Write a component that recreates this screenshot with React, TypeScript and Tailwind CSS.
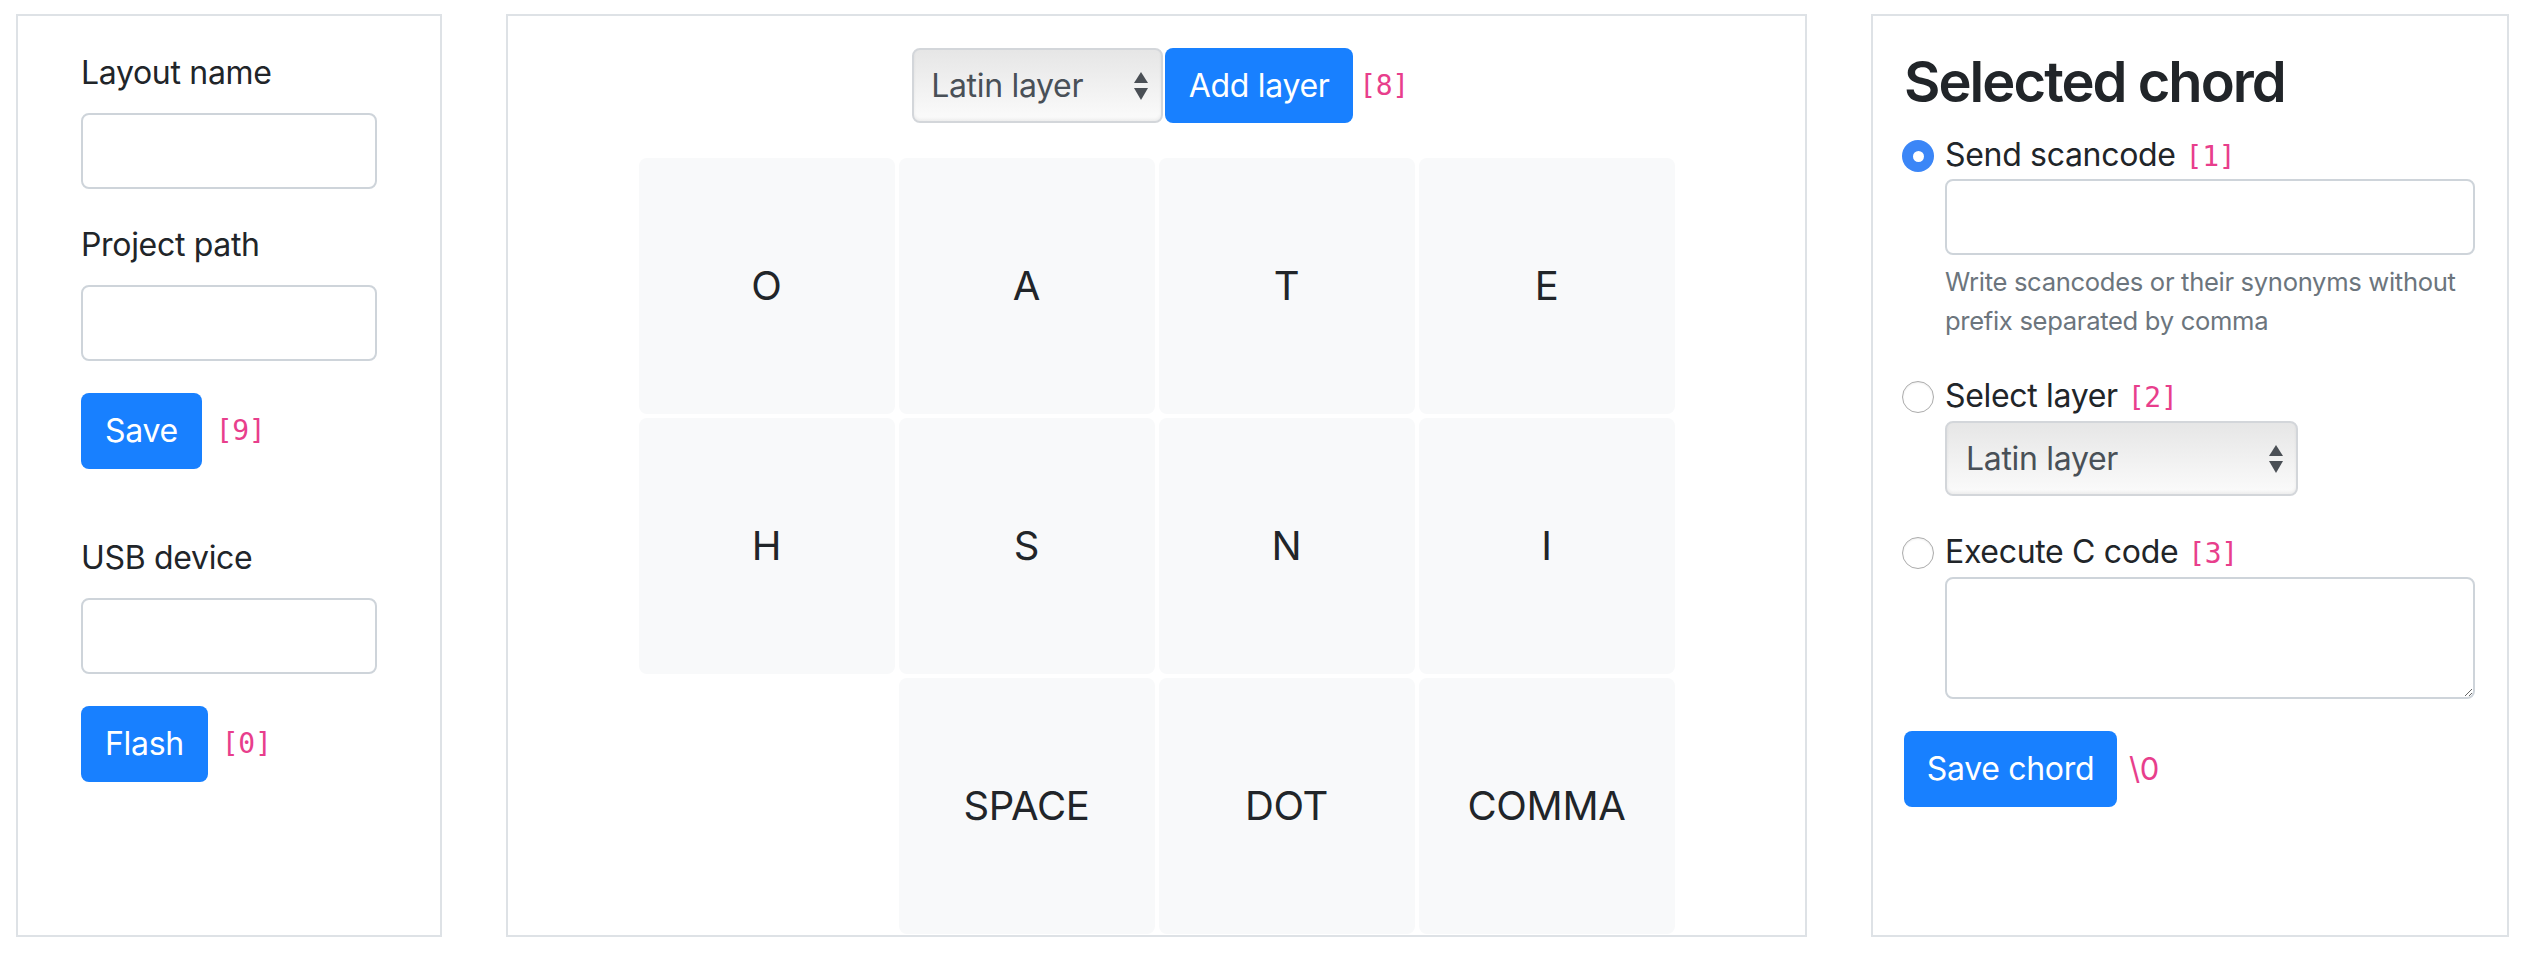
import React from "react";

const code = "font-['DejaVu_Sans_Mono',monospace] text-[28px] text-[#e83e8c]";
const btn =
  "h-[76px] whitespace-nowrap rounded-[8px] bg-[#1880ff] text-[32px] leading-[48px] text-white";
const input =
  "block h-[76px] w-full rounded-[8px] border-2 border-[#ced4da] bg-white";

function Field({ label }: { label: string }) {
  return (
    <div className="mb-8">
      <label className="mb-4 block">{label}</label>
      <input type="text" className={input} />
    </div>
  );
}

function FakeSelect({ width, padLeft }: { width: string; padLeft: string }) {
  // mimics the native macOS select look
  return (
    <div
      className={`flex h-[75px] items-center rounded-[8px] border-2 border-[#d3d6da] bg-gradient-to-b from-[#e6e6e6] to-[#fbfbfb] pr-[12px] text-[#495057] shadow-[inset_0_-2px_3px_rgba(0,0,0,0.06)] ${width} ${padLeft}`}
    >
      <span>Latin layer</span>
      <svg className="ml-auto" width="16" height="30" viewBox="0 0 16 30">
        <path d="M8 1 L15 12 L1 12 Z" fill="#4a4f55" />
        <path d="M1 17 L15 17 L8 29 Z" fill="#4a4f55" />
      </svg>
    </div>
  );
}

function Radio({ checked }: { checked?: boolean }) {
  return checked ? (
    <span className="flex h-[32px] w-[32px] shrink-0 items-center justify-center rounded-full bg-[#3b86f7]">
      <span className="block h-[11px] w-[11px] rounded-full bg-white" />
    </span>
  ) : (
    <span className="block h-[32px] w-[32px] shrink-0 rounded-full border border-[#acacac] bg-white shadow-[inset_0_1px_2px_rgba(0,0,0,0.08)]" />
  );
}

function RadioLabel({
  checked,
  text,
  hint,
  raised,
}: {
  checked?: boolean;
  text: string;
  hint: string;
  raised?: boolean;
}) {
  return (
    <label className="flex h-[52px] items-start">
      <span className={`-ml-[2px] ${raised ? "mt-[9px]" : "mt-[13px]"}`}>
        <Radio checked={checked} />
      </span>
      <span className={`ml-[11px] ${raised ? "pt-0" : "pt-[4px]"}`}>
        {text}
        <code className={`ml-[10px] leading-none ${code}`}>{hint}</code>
      </span>
    </label>
  );
}

function Key({ label }: { label?: string }) {
  if (!label) return <div />;
  return (
    <div className="flex h-[256px] items-center justify-center rounded-[8px] bg-[#f8f9fa] text-[40px]">
      {label}
    </div>
  );
}

const keys = ["O", "A", "T", "E", "H", "S", "N", "I", "", "SPACE", "DOT", "COMMA"];

export default function App() {
  return (
    <div className="flex min-h-[962px] items-start bg-white pl-[16px] pt-[14px] font-['Inter',sans-serif] text-[32px] leading-[48px] tracking-[-0.01em] text-[#212529]">
      {/* settings */}
      <aside className="h-[923px] w-[426px] shrink-0 border-2 border-[#dee2e6] pl-[63px] pr-[63px] pt-[33px]">
        <Field label="Layout name" />
        <Field label="Project path" />
        <div className="flex items-center">
          <button className={`${btn} px-6`}>Save</button>
          <code className={`ml-[14px] ${code}`}>[9]</code>
        </div>

        <div className="mt-[65px]">
          <Field label="USB device" />
        </div>
        <div className="flex items-center">
          <button className={`${btn} px-6`}>Flash</button>
          <code className={`ml-[14px] ${code}`}>[0]</code>
        </div>
      </aside>

      {/* layer keys */}
      <main className="ml-[64px] flex h-[923px] w-[1301px] shrink-0 flex-col items-center border-2 border-[#dee2e6] pt-[32px]">
        <div className="flex items-center pl-[8px]">
          <FakeSelect width="w-[251px]" padLeft="pl-[17px]" />
          <button className="ml-[2px] h-[75px] w-[188px] rounded-[8px] bg-[#1880ff] text-white">
            Add layer
          </button>
          <code className={`ml-[6px] ${code}`}>[8]</code>
        </div>
        <div className="mt-[35px] grid grid-cols-[repeat(4,256px)] gap-[4px]">
          {keys.map((k, i) => (
            <Key key={i} label={k} />
          ))}
        </div>
      </main>

      {/* chord editor */}
      <section className="ml-[64px] h-[923px] w-[638px] shrink-0 border-2 border-[#dee2e6] pl-[31px] pr-[32px] pt-[33px]">
        <h3 className="mb-[11px] text-[56px] font-semibold leading-[1.2] tracking-[-0.035em]">
          Selected chord
        </h3>

        <div className="mb-8">
          <RadioLabel checked text="Send scancode" hint="[1]" />
          <div className="ml-[41px]">
            <input type="text" className={`${input} h-[74px]`} />
            <p className="mt-2 text-[25.6px] leading-[38.4px] text-[#6c757d]">
              Write scancodes or their synonyms without prefix separated by comma
            </p>
          </div>
        </div>

        <div className="mb-8">
          <RadioLabel raised text="Select layer" hint="[2]" />
          <div className="-mt-[3px] ml-[41px]">
            <FakeSelect width="w-[353px]" padLeft="pl-[19px]" />
          </div>
        </div>

        <div className="mb-8">
          <RadioLabel raised text="Execute C code" hint="[3]" />
          <div className="-mt-[3px] ml-[41px]">
            <textarea className="block h-[122px] w-full rounded-[8px] border-2 border-[#ced4da] bg-white" />
          </div>
        </div>

        <div className="flex items-center">
          <button className={`${btn} w-[213px]`}>Save chord</button>
          <span className="ml-[12px] text-[31px] text-[#e83e8c]">\0</span>
        </div>
      </section>
    </div>
  );
}
